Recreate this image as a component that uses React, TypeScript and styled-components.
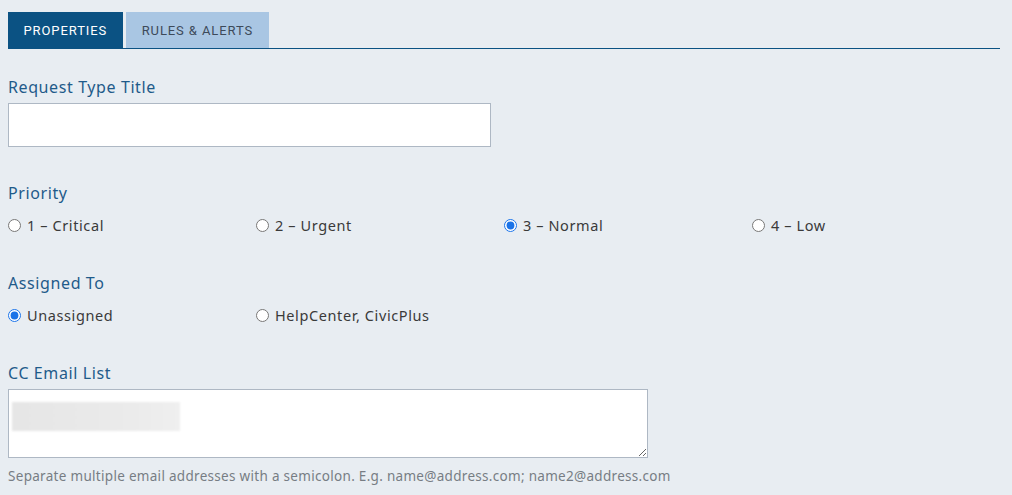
import React from 'react';
import styled, { createGlobalStyle } from 'styled-components';

const GlobalStyle = createGlobalStyle`
  html, body {
    margin: 0;
    padding: 0;
    background: #e8edf2;
  }
  body {
    font-family: 'Noto Sans', Lato, sans-serif;
  }
`;

const Page = styled.div`
  padding: 12px 12px 0 8px;
  width: 992px;
`;

const TabBar = styled.div`
  display: flex;
  gap: 3px;
  border-bottom: 1px solid #0b5283;
`;

const Tab = styled.div<{ $active?: boolean }>`
  height: 36px;
  padding: 0 16px 0 15.5px;
  display: flex;
  align-items: center;
  font-family: Roboto, 'Noto Sans', sans-serif;
  font-size: 13px;
  letter-spacing: 0.9px;
  background: ${(p) => (p.$active ? '#0b5283' : '#a9c6e3')};
  color: ${(p) => (p.$active ? '#ffffff' : '#3d4a5a')};
`;

const Field = styled.div<{ $top: number }>`
  margin-top: ${(p) => p.$top}px;
`;

const Label = styled.div`
  font-size: 16px;
  letter-spacing: 0.6px;
  color: #1f5b8a;
  line-height: 20px;
  margin-bottom: 6px;
`;

const TextInput = styled.input`
  display: block;
  box-sizing: border-box;
  width: 483px;
  height: 44px;
  background: #fff;
  border: 1px solid #aeb8c4;
  border-radius: 0;
  outline: none;
`;

const RadioRow = styled.div`
  display: grid;
  grid-template-columns: repeat(4, 248px);
  margin-top: 13px;
`;

const Option = styled.label`
  display: flex;
  align-items: center;
  gap: 6px;
  font-size: 14.5px;
  letter-spacing: 0.6px;
  color: #3a3a3a;
  line-height: 18px;

  input {
    margin: 0;
    width: 13px;
    height: 13px;
    accent-color: #1a73e8;
  }
`;

const AreaWrap = styled.div`
  position: relative;
  width: 640px;
`;

const TextArea = styled.textarea`
  display: block;
  box-sizing: border-box;
  width: 640px;
  height: 69px;
  background: #fff;
  border: 1px solid #aeb8c4;
  border-radius: 0;
  outline: none;
  resize: vertical;
`;

const Redacted = styled.div`
  position: absolute;
  left: 4px;
  top: 13px;
  width: 168px;
  height: 29px;
  background: linear-gradient(90deg, #e6e6e6, #ebebeb 70%, #efefef);
  filter: blur(1px);
`;

const Hint = styled.div`
  margin-top: 9px;
  font-size: 13.5px;
  letter-spacing: 0.3px;
  line-height: 18px;
  color: #777d84;
`;

type Opt = { label: string; checked?: boolean };

const RadioGroup = ({ name, options }: { name: string; options: Opt[] }) => (
  <RadioRow>
    {options.map((o) => (
      <Option key={o.label}>
        <input type="radio" name={name} defaultChecked={o.checked} />
        {o.label}
      </Option>
    ))}
  </RadioRow>
);

export default function App() {
  return (
    <Page>
      <GlobalStyle />
      <TabBar>
        <Tab $active>PROPERTIES</Tab>
        <Tab>RULES &amp; ALERTS</Tab>
      </TabBar>

      <Field $top={28}>
        <Label>Request Type Title</Label>
        <TextInput type="text" />
      </Field>

      <Field $top={36}>
        <Label>Priority</Label>
        <RadioGroup
          name="priority"
          options={[
            { label: '1 – Critical' },
            { label: '2 – Urgent' },
            { label: '3 – Normal', checked: true },
            { label: '4 – Low' },
          ]}
        />
      </Field>

      <Field $top={39}>
        <Label>Assigned To</Label>
        <RadioGroup
          name="assigned"
          options={[
            { label: 'Unassigned', checked: true },
            { label: 'HelpCenter, CivicPlus' },
          ]}
        />
      </Field>

      <Field $top={39}>
        <Label>CC Email List</Label>
        <AreaWrap>
          <TextArea />
          <Redacted />
        </AreaWrap>
        <Hint>Separate multiple email addresses with a semicolon. E.g. name@address.com; name2@address.com</Hint>
      </Field>
    </Page>
  );
}
